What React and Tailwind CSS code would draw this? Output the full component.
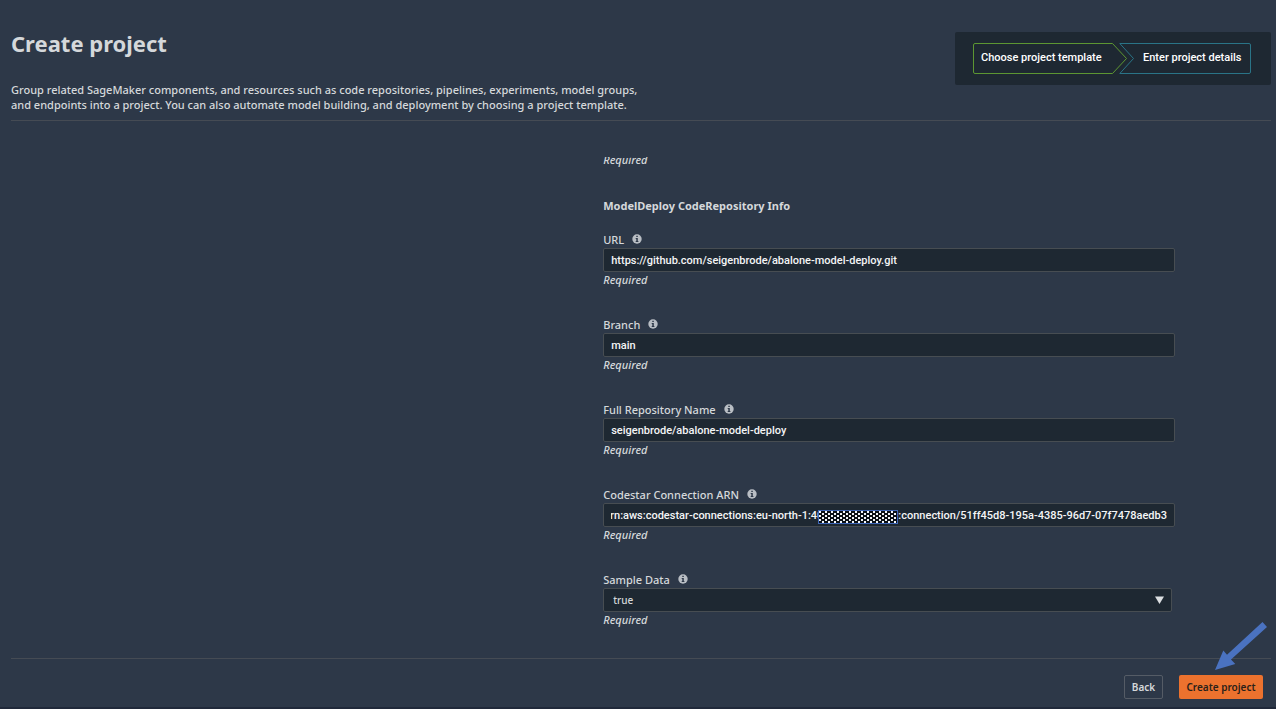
import { useEffect, useRef, useState } from 'react';

const initialFields = [
  { id: 'url', label: 'URL', value: 'https://github.com/seigenbrode/abalone-model-deploy.git' },
  { id: 'branch', label: 'Branch', value: 'main' },
  { id: 'repository', label: 'Full Repository Name', value: 'seigenbrode/abalone-model-deploy' },
  {
    id: 'connection',
    label: 'Codestar Connection ARN',
    value: 'arn:aws:codestar-connections:eu-north-1:40000000000000:connection/51ff45d8-195a-4385-96d7-07f7478aedb3',
    masked: true,
  },
];

function InfoIcon() {
  return (
    <svg viewBox="0 0 10 10" className="w-[10px] h-[10px] mb-0.5" aria-hidden="true">
      <circle cx="5" cy="5" r="4.7" fill="#b9bec4" />
      <path d="M4.3 1.7h1.5v1.3H4.3zM3.7 4h2.1v3h.6v.9H3.7V7h.6V4.9h-.6z" fill="#2d3848" />
    </svg>
  );
}

function Required() {
  return <p className="text-[11px] leading-4 font-medium italic">Required</p>;
}

function FieldLabel({ id, children }) {
  return (
    <div className="flex items-center gap-2 h-4">
      <label htmlFor={id} className="text-[11px] leading-4 font-medium">{children}</label>
      <InfoIcon />
    </div>
  );
}

// Covers the account id part of the ARN
function AccountMask() {
  return (
    <svg className="absolute right-[277px] top-[7px] w-[80px] h-[14px]" viewBox="0 0 80 14" aria-hidden="true">
      <defs>
        <pattern id="dots" x="1" y="1" width="6" height="4" patternUnits="userSpaceOnUse">
          <rect width="6" height="4" fill="#0b1016" />
          <rect x="0" y="0" width="2" height="2" fill="#f3f6fa" />
          <rect x="3" y="2" width="2" height="2" fill="#f3f6fa" />
        </pattern>
      </defs>
      <rect x="0.5" y="0.5" width="79" height="13" fill="url(#dots)" stroke="#3f67b8" />
    </svg>
  );
}

function TextField({ id, label, value, masked, onChange }) {
  const inputRef = useRef(null);

  // long values show their end
  useEffect(() => {
    inputRef.current.scrollLeft = inputRef.current.scrollWidth;
  }, []);

  return (
    <div>
      <FieldLabel id={id}>{label}</FieldLabel>
      <div className="relative">
        <input
          id={id}
          ref={inputRef}
          type="text"
          value={value}
          onChange={e => onChange(id, e.target.value)}
          className="block w-full h-6 px-[7px] rounded-xs border border-[#474d52] bg-[#1e2832] font-['Roboto',sans-serif] text-[11px] font-medium text-[#f4f5f6]"
        />
        {masked && <AccountMask />}
      </div>
      <Required />
    </div>
  );
}

function Steps() {
  return (
    <nav aria-label="Steps" className="flex shrink-0 bg-[#1e2832] rounded-xs h-[53px] pl-[18px] pr-5 items-center font-['Roboto',sans-serif] text-[11px] font-medium text-white">
      <div className="relative w-[154px] h-[31px] flex items-center pl-2">
        <svg className="absolute inset-0" width="154" height="31" viewBox="0 0 154 31" fill="none" stroke="#5c9632">
          <path d="M2 .5h137.500L153.500 15.500 139.500 30.500H2Q.5 30.500 .5 29V2Q.5 .5 2 .5z" />
        </svg>
        <span className="relative whitespace-nowrap">Choose project template</span>
      </div>
      <div className="relative -ml-2 w-[132px] h-[31px] flex items-center pl-6">
        <svg className="absolute inset-0" width="132" height="31" viewBox="0 0 132 31" fill="none" stroke="#2a7487">
          <path d="M.8 .5H130Q131.500 .5 131.500 2V29Q131.500 30.500 130 30.500H.8L14.500 15.500z" />
        </svg>
        <span className="relative whitespace-nowrap">Enter project details</span>
      </div>
    </nav>
  );
}

export default function App() {
  const [fields, setFields] = useState(initialFields);
  const [sampleData, setSampleData] = useState('true');

  const updateField = (id, value) => {
    setFields(fields.map(f => (f.id === id ? { ...f, value } : f)));
  };

  return (
    <div className="h-screen flex flex-col bg-[#2d3848] text-[#d5d8db] font-['Noto_Sans',sans-serif]">
      <div className="flex-1 min-h-0 flex flex-col pl-[11px] pr-[5px]">
        <header className="flex justify-between items-start h-[121px] pt-8 border-b border-[#454b54]">
          <div>
            <h1 className="text-[22px] leading-[22px] font-bold">Create project</h1>
            <p className="mt-7 max-w-[640px] text-[11px] leading-[15px] font-medium">
              Group related SageMaker components, and resources such as code repositories, pipelines, experiments, model groups,
              and endpoints into a project. You can also automate model building, and deployment by choosing a project template.
            </p>
          </div>
          <Steps />
        </header>

        <main className="flex-1 min-h-0 mt-9 overflow-hidden flex flex-col justify-end pb-[30px]">
          <div className="ml-[47%] mr-24">
            <Required />
            <h2 className="mt-[30px] mb-[18px] text-[11px] leading-4 font-bold">ModelDeploy CodeRepository Info</h2>
            <div className="flex flex-col gap-[29px]">
              {fields.map(f => (
                <TextField key={f.id} {...f} onChange={updateField} />
              ))}
              <div>
                <FieldLabel id="sample-data">Sample Data</FieldLabel>
                <div className="relative mr-[3px]">
                  <select
                    id="sample-data"
                    value={sampleData}
                    onChange={e => setSampleData(e.target.value)}
                    className="block appearance-none w-full h-6 px-[9px] rounded-xs border border-[#474d52] bg-[#1e2832] text-[10px] font-medium"
                  >
                    <option value="true">true</option>
                    <option value="false">false</option>
                  </select>
                  <svg className="absolute right-2 top-2 w-[9px] h-2 pointer-events-none" viewBox="0 0 9 8" aria-hidden="true">
                    <path d="M0 .5h9L4.500 8z" fill="#dcdfe2" />
                  </svg>
                </div>
                <Required />
              </div>
            </div>
          </div>
        </main>

        <footer className="relative flex justify-end gap-4 pt-4 pb-2 pr-2 border-t border-[#454b54] text-[10px] font-semibold">
          <button className="h-6 w-[39px] rounded-xs border border-[#555c66]">Back</button>
          <button className="h-6 w-[84px] rounded-xs bg-[#ec722e] text-[#2a2119] whitespace-nowrap">Create project</button>
          <svg className="absolute right-1 -top-[37px] w-[52px] h-12 pointer-events-none" viewBox="0 0 52 48" aria-hidden="true">
            <path d="M47.500 0 52 5 16 37.500 20.300 42 0 48 8.300 28.500 12 32.700z" fill="#4a72c0" />
          </svg>
        </footer>
      </div>
      <div className="h-1 border-t-2 border-[#20293a] bg-white" />
    </div>
  );
}
